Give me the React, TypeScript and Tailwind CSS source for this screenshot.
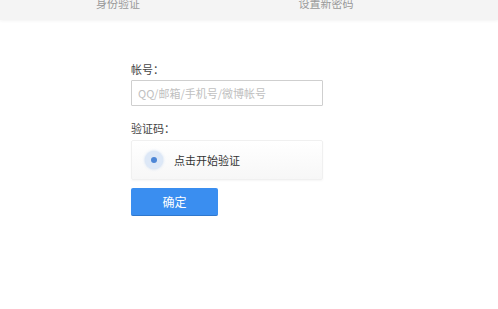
const font = "font-['Microsoft_YaHei','Noto_Sans_CJK_SC',sans-serif]";

const steps = ["身份验证", "设置新密码"];

export default function App() {
  return (
    <div className={`w-[498px] h-[309px] bg-white overflow-hidden ${font}`}>
      {/* step bar, cut off at the top */}
      <div className="h-5 bg-[#f4f4f4] shadow-[0_1px_3px_rgba(0,0,0,0.05)] flex pl-[14px] overflow-hidden">
        {steps.map((s) => (
          <div
            key={s}
            className="w-[208px] shrink-0 text-center text-[11px] leading-[15px] text-[#999] -mt-[4px]"
          >
            {s}
          </div>
        ))}
      </div>

      <div className="pl-[131px] pt-[42px] w-[323px]">
        <div className="text-[11px] leading-[15px] text-[#444]">帐号：</div>
        <input
          className="mt-[3px] w-full h-[26px] border border-[#cfcfcf] rounded-[1px] px-[6px] text-[11px] text-[#333] placeholder:text-[#c0c0c0] outline-none"
          placeholder="QQ/邮箱/手机号/微博帐号"
        />

        <div className="mt-[15px] text-[11px] leading-[15px] text-[#444]">验证码：</div>
        <div className="mt-[4px] h-[40px] flex items-center pl-[13px] gap-[11px] border border-[#f0f0f0] rounded-[2px] bg-gradient-to-b from-white to-[#f7f7f7] shadow-[0_1px_2px_rgba(0,0,0,0.04)]">
          <div className="w-[18px] h-[18px] rounded-full bg-[#dde8f7] shadow-[0_0_3px_rgba(80,140,220,0.35)] flex items-center justify-center">
            <div className="w-[6px] h-[6px] rounded-full bg-[#4d86d6]" />
          </div>
          <span className="text-[11px] text-[#333]">点击开始验证</span>
        </div>

        <button className="mt-[8px] w-[87px] h-[28px] bg-[#3a8ef0] border-b border-[#2f77cc] rounded-[2px] text-white text-[12px] flex items-center justify-center">
          确定
        </button>
      </div>
    </div>
  );
}
